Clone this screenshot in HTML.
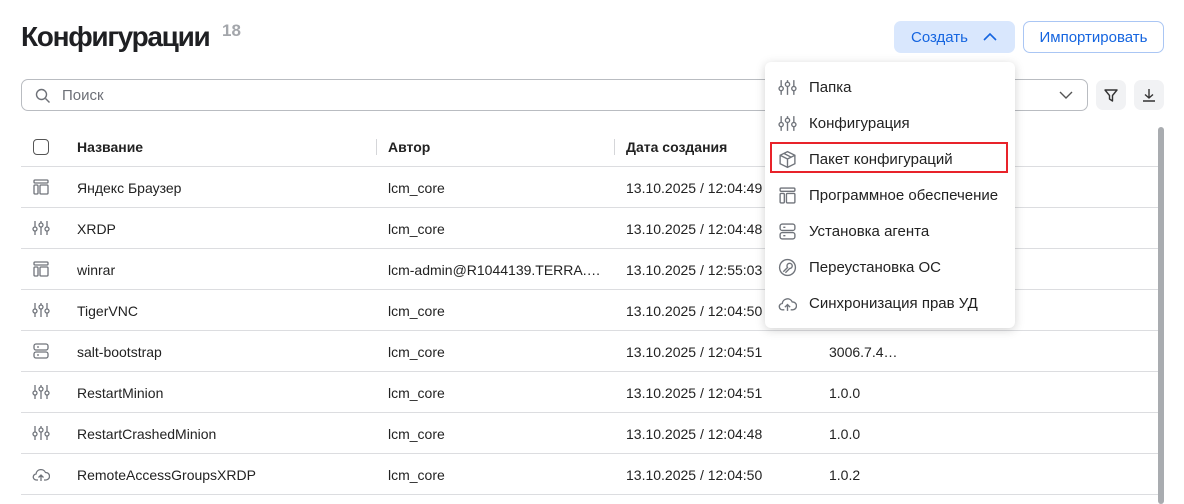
<!DOCTYPE html>
<html><head><meta charset="utf-8"><style>
*{box-sizing:border-box;margin:0;padding:0}
body{width:1184px;height:504px;overflow:hidden;background:#fff;font-family:"Liberation Sans","Noto Sans CJK JP",sans-serif;color:#222;position:relative}
.a{position:absolute}
h1{position:absolute;left:21px;top:21px;font-size:28px;font-weight:bold;letter-spacing:-1.3px;color:#1f2023}
.cnt{left:222px;top:21px;font-size:17px;color:#a3a6ab;font-weight:bold}
.btn{height:32px;border-radius:7px;font-size:15px;display:flex;align-items:center;justify-content:center;color:#1565e0}
.search{left:21px;top:79px;width:1067px;height:32px;border:1px solid #b9bcc1;border-radius:7px}
.sq{width:30px;height:30px;border-radius:7px;background:#f1f2f4;display:flex;align-items:center;justify-content:center}
.line{left:21px;width:1137px;height:1px;background:#dcdde0}
.t{font-size:14px;color:#222}
.h{font-size:14px;font-weight:bold;color:#222}
.sep{width:1px;height:16px;background:#d5d6d9;top:139px}
svg{display:block}
.menu{left:765px;top:62px;width:250px;height:266px;background:#fff;border-radius:6px;box-shadow:0 2px 10px rgba(0,0,0,.18)}
.mi{position:absolute;left:13px;font-size:15px;color:#222;display:flex;align-items:center;height:22px}
.mi svg{margin-right:12px}
</style></head><body>
<svg width="0" height="0" style="position:absolute">
<defs>
<g id="sl" fill="none" stroke="#70747b" stroke-width="1.3"><path d="M3 2v6M3 12v4M9 2v2M9 8v8M15 2v6M15 12v4"/><circle cx="3" cy="10" r="2"/><circle cx="9" cy="6" r="2"/><circle cx="15" cy="10" r="2"/></g>
<g id="sw" fill="none" stroke="#70747b" stroke-width="1.3"><rect x="2" y="2" width="14" height="3" rx="1"/><rect x="2" y="7" width="4" height="9" rx="1"/><rect x="8" y="7" width="8" height="9" rx="1"/></g>
<g id="sv" fill="none" stroke="#70747b" stroke-width="1.3"><rect x="2" y="2" width="14" height="6" rx="2"/><rect x="2" y="10" width="14" height="6" rx="2"/><path d="M5 5h2M5 13h2"/></g>
<g id="cl" fill="none" stroke="#70747b" stroke-width="1.3"><path d="M6 15H4.5a3 3 0 0 1-.5-6 5 5 0 0 1 9.5-1.5A3.5 3.5 0 0 1 14 15h-2M9 16v-6M6.5 12.5 9 10l2.5 2.5"/></g>
<g id="bx" fill="none" stroke="#70747b" stroke-width="1.3"><path d="M9 1.5 16 5v8l-7 3.5L2 13V5zM2 5l7 3.5L16 5M9 8.5v8M5.5 3.2l7 3.6"/></g>
<g id="os" fill="none" stroke="#70747b" stroke-width="1.3"><circle cx="9" cy="9" r="7.5"/><path d="M5 13l4-4a2.5 2.5 0 1 1 2 1l-4 4"/></g>
</defs></svg>

<h1>Конфигурации</h1>
<div class="a cnt">18</div>
<div class="a btn" style="left:894px;top:21px;width:121px;background:#d9e7fd">Создать<svg width="16" height="10" style="margin-left:14px"><path d="M2 8l6-6 6 6" fill="none" stroke="#1565e0" stroke-width="1.6"/></svg></div>
<div class="a btn" style="left:1023px;top:21px;width:141px;border:1px solid #aac6f4">Импортировать</div>

<div class="a search"></div>
<svg class="a" style="left:35px;top:88px" width="16" height="16"><circle cx="6.5" cy="6.5" r="5" fill="none" stroke="#6d7077" stroke-width="1.4"/><path d="M10.5 10.5l4 4" stroke="#6d7077" stroke-width="1.4"/></svg>
<div class="a" style="left:62px;top:87px;font-size:15px;color:#6d7077">Поиск</div>
<svg class="a" style="left:1058px;top:89px" width="16" height="12"><path d="M2 3l6 6 6-6" fill="none" stroke="#555" stroke-width="1.4"/></svg>
<div class="a sq" style="left:1096px;top:80px"><svg width="16" height="16"><path d="M2 3h12l-4.5 5.5V14L6.5 12V8.5z" fill="none" stroke="#333" stroke-width="1.4" stroke-linejoin="round"/></svg></div>
<div class="a sq" style="left:1134px;top:80px"><svg width="16" height="16"><path d="M8 2v9M4 7.5 8 11l4-3.5M2 14h12" fill="none" stroke="#333" stroke-width="1.4"/></svg></div>

<div class="a" style="left:33px;top:139px;width:16px;height:16px;border:1.5px solid #555;border-radius:4px"></div>
<div class="a h" style="left:77px;top:139px">Название</div>
<div class="a sep" style="left:376px"></div>
<div class="a h" style="left:388px;top:139px">Автор</div>
<div class="a sep" style="left:614px"></div>
<div class="a h" style="left:626px;top:139px">Дата создания</div>
<div class="a sep" style="left:770px"></div>

<div class="a line" style="top:166px"></div>
<div class="a line" style="top:207px"></div>
<div class="a line" style="top:248px"></div>
<div class="a line" style="top:289px"></div>
<div class="a line" style="top:330px"></div>
<div class="a line" style="top:371px"></div>
<div class="a line" style="top:412px"></div>
<div class="a line" style="top:453px"></div>
<div class="a line" style="top:494px"></div>

<svg class="a" style="left:32px;top:178px" width="18" height="18"><use href="#sw"/></svg>
<div class="a t" style="left:77px;top:180px">Яндекс Браузер</div><div class="a t" style="left:388px;top:180px">lcm_core</div><div class="a t" style="left:626px;top:180px">13.10.2025 / 12:04:49</div>
<svg class="a" style="left:32px;top:219px" width="18" height="18"><use href="#sl"/></svg>
<div class="a t" style="left:77px;top:221px">XRDP</div><div class="a t" style="left:388px;top:221px">lcm_core</div><div class="a t" style="left:626px;top:221px">13.10.2025 / 12:04:48</div>
<svg class="a" style="left:32px;top:260px" width="18" height="18"><use href="#sw"/></svg>
<div class="a t" style="left:77px;top:262px">winrar</div><div class="a t" style="left:388px;top:262px">lcm-admin@R1044139.TERRA.…</div><div class="a t" style="left:626px;top:262px">13.10.2025 / 12:55:03</div>
<svg class="a" style="left:32px;top:301px" width="18" height="18"><use href="#sl"/></svg>
<div class="a t" style="left:77px;top:303px">TigerVNC</div><div class="a t" style="left:388px;top:303px">lcm_core</div><div class="a t" style="left:626px;top:303px">13.10.2025 / 12:04:50</div>
<svg class="a" style="left:32px;top:342px" width="18" height="18"><use href="#sv"/></svg>
<div class="a t" style="left:77px;top:344px">salt-bootstrap</div><div class="a t" style="left:388px;top:344px">lcm_core</div><div class="a t" style="left:626px;top:344px">13.10.2025 / 12:04:51</div><div class="a t" style="left:829px;top:344px">3006.7.4…</div>
<svg class="a" style="left:32px;top:383px" width="18" height="18"><use href="#sl"/></svg>
<div class="a t" style="left:77px;top:385px">RestartMinion</div><div class="a t" style="left:388px;top:385px">lcm_core</div><div class="a t" style="left:626px;top:385px">13.10.2025 / 12:04:51</div><div class="a t" style="left:829px;top:385px">1.0.0</div>
<svg class="a" style="left:32px;top:424px" width="18" height="18"><use href="#sl"/></svg>
<div class="a t" style="left:77px;top:426px">RestartCrashedMinion</div><div class="a t" style="left:388px;top:426px">lcm_core</div><div class="a t" style="left:626px;top:426px">13.10.2025 / 12:04:48</div><div class="a t" style="left:829px;top:426px">1.0.0</div>
<svg class="a" style="left:32px;top:465px" width="18" height="18"><use href="#cl"/></svg>
<div class="a t" style="left:77px;top:467px">RemoteAccessGroupsXRDP</div><div class="a t" style="left:388px;top:467px">lcm_core</div><div class="a t" style="left:626px;top:467px">13.10.2025 / 12:04:50</div><div class="a t" style="left:829px;top:467px">1.0.2</div>

<div class="a" style="left:1158px;top:127px;width:6px;height:377px;background:#a9acb0;border-radius:3px"></div>

<div class="a menu">
<div class="mi" style="top:14px"><svg width="19" height="19" viewBox="0 0 18 18"><use href="#sl"/></svg>Папка</div>
<div class="mi" style="top:50px"><svg width="19" height="19" viewBox="0 0 18 18"><use href="#sl"/></svg>Конфигурация</div>
<div class="a" style="left:5px;top:80px;width:238px;height:31px;border:2px solid #e8232a"></div>
<div class="mi" style="top:86px"><svg width="19" height="19" viewBox="0 0 18 18"><use href="#bx"/></svg>Пакет конфигураций</div>
<div class="mi" style="top:122px"><svg width="19" height="19" viewBox="0 0 18 18"><use href="#sw"/></svg>Программное обеспечение</div>
<div class="mi" style="top:158px"><svg width="19" height="19" viewBox="0 0 18 18"><use href="#sv"/></svg>Установка агента</div>
<div class="mi" style="top:194px"><svg width="19" height="19" viewBox="0 0 18 18"><use href="#os"/></svg>Переустановка ОС</div>
<div class="mi" style="top:230px"><svg width="19" height="19" viewBox="0 0 18 18"><use href="#cl"/></svg>Синхронизация прав УД</div>
</div>
</body></html>
